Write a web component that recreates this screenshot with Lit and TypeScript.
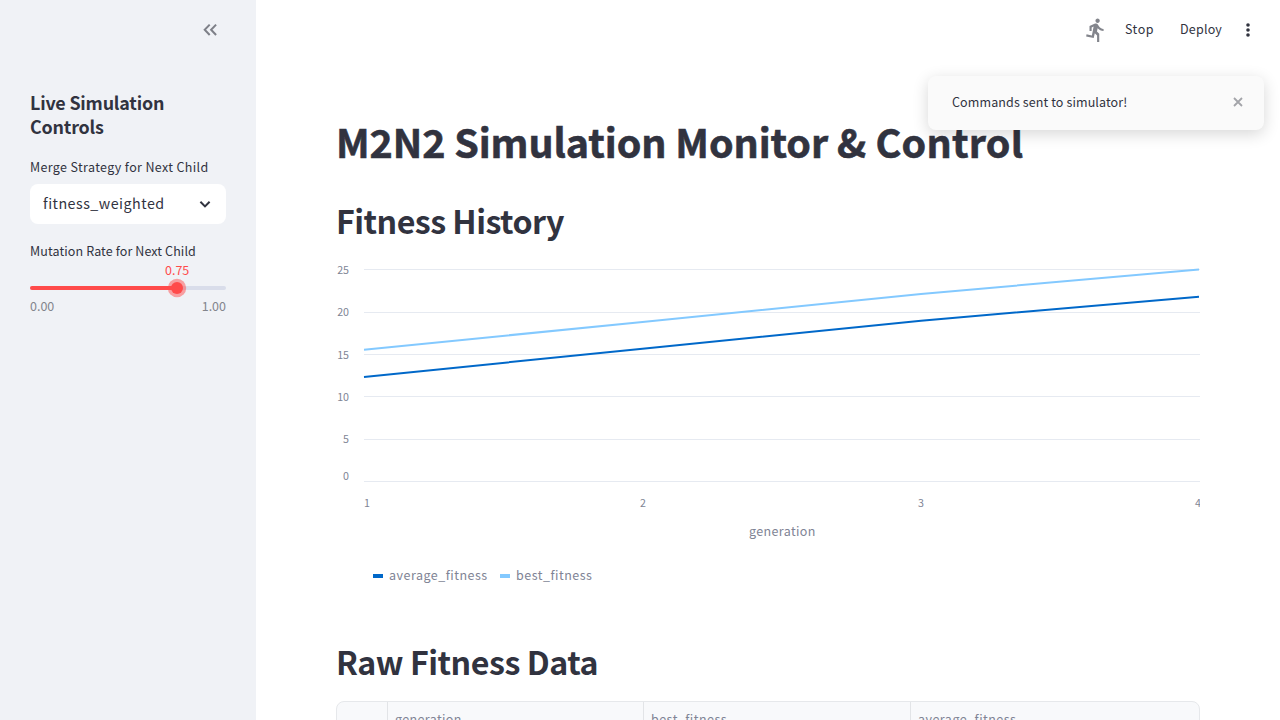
import { LitElement, html, svg, css } from "lit";
import { customElement, property } from "lit/decorators.js";

const FONT = css`"Noto Sans CJK SC", "Noto Sans CJK JP", "Open Sans", sans-serif`;

@customElement("side-panel")
class SidePanel extends LitElement {
  @property() strategy = "fitness_weighted";
  @property({ type: Number }) rate = 0.75;

  static styles = css`
    :host { display: flex; flex-direction: column; width: 256px; flex: none; height: 100%; background: #f0f2f6; box-sizing: border-box; padding: 0 30px; color: #31333f; font-family: ${FONT}; }
    .top { height: 60px; flex: none; display: flex; align-items: center; justify-content: flex-end; padding-right: 8px; }
    .top svg { display: block; }
    .title { margin: 30px 0 0; font-size: 17.9px; line-height: 24px; font-weight: 600; letter-spacing: -0.2px; }
    .label { font-size: 12.5px; line-height: 20px; white-space: nowrap; }
    .merge { margin-top: 19px; letter-spacing: 0.36px; }
    .select { margin-top: 7px; height: 40px; flex: none; border-radius: 8px; background: #fff; display: flex; align-items: center; justify-content: space-between; padding: 0 13px; font-size: 14.3px; letter-spacing: 0.48px; }
    .select span { padding-bottom: 4px; }
    .mutation { margin-top: 17px; letter-spacing: 0.11px; }
    .value-row { height: 20px; margin-top: -1px; display: flex; }
    .offset { flex: none; }
    .value { width: 24px; margin-left: -12px; text-align: center; color: #ff4b4b; font-size: 12.5px; line-height: 20px; }
    .slider { height: 16px; display: flex; align-items: center; }
    .track { height: 4px; border-radius: 4px; flex: 1; background: #d9ddea; display: flex; align-items: center; }
    .fill { height: 4px; border-radius: 4px 0 0 4px; background: #ff4b4b; }
    .thumb { width: 12px; height: 12px; border-radius: 50%; background: #ff4b4b; margin-left: -6px; box-shadow: 0 0 0 3.2px rgba(255, 75, 75, 0.5); flex: none; }
    .ends { display: flex; justify-content: space-between; font-size: 12.5px; line-height: 20px; color: #83858c; }
  `;

  render() {
    const pct = this.rate * 100;
    return html`
      <div class="top">
        <svg width="16" height="16" viewBox="0 0 16 16" fill="none" stroke="#7e8088" stroke-width="2"><path d="M7.7 2.6 2.7 7.8l5 5.2M14.1 2.6 9.1 7.8l5 5.2" /></svg>
      </div>
      <h2 class="title">Live Simulation Controls</h2>
      <div class="label merge">Merge Strategy for Next Child</div>
      <div class="select">
        <span>${this.strategy}</span>
        <svg width="16" height="16" viewBox="0 0 16 16" fill="none" stroke="#31333f" stroke-width="2"><path d="M3.4 5.8 8 10.4l4.6-4.6" /></svg>
      </div>
      <div class="label mutation">Mutation Rate for Next Child</div>
      <div class="value-row">
        <div class="offset" style="width:${pct}%"></div>
        <div class="value">${this.rate.toFixed(2)}</div>
      </div>
      <div class="slider"><div class="track"><div class="fill" style="width:${pct}%"></div><div class="thumb"></div></div></div>
      <div class="ends"><span>0.00</span><span>1.00</span></div>
    `;
  }
}

@customElement("fitness-chart")
class FitnessChart extends LitElement {
  static styles = css`
    :host { display: block; width: 864px; height: 340px; }
    svg { display: block; overflow: hidden; }
    text { font-family: ${FONT}; fill: #808495; }
    .tick { font-size: 10.7px; }
    .name { font-size: 12.5px; letter-spacing: 0.5px; }
    .axis { letter-spacing: 0.37px; }
    .grid { stroke: #e6eaf1; stroke-width: 1; }
    .series { fill: none; stroke-width: 2; }
  `;

  render() {
    const rows = [[25, 9.5, 14], [20, 52.5, 56], [15, 94.5, 99], [10, 136.5, 141], [5, 179.5, 183], [0, 221.5, 220]];
    return html`<svg width="864" height="340" viewBox="0 0 864 340">
      ${rows.map(([n, y, ty]) => svg`<line class="grid" x1="28" x2="864" y1=${y} y2=${y} /><text class="tick" x="13" y=${ty} text-anchor="end">${n}</text>`)}
      <polyline class="series" stroke="#0068c9" points="28,117 306.5,88.7 585,60.7 863,36.8" />
      <polyline class="series" stroke="#83c9ff" points="28,89.7 306.5,62 585,33.9 863,9.5" />
      <text class="tick" x="28" y="247">1</text>
      <text class="tick" x="307" y="247" text-anchor="middle">2</text>
      <text class="tick" x="585" y="247" text-anchor="middle">3</text>
      <text class="tick" x="859" y="247">4</text>
      <text class="name axis" x="413" y="276">generation</text>
      <rect x="37" y="314" width="10" height="4" fill="#0068c9" />
      <text class="name" x="53" y="320">average_fitness</text>
      <rect x="164" y="314" width="10" height="4" fill="#83c9ff" />
      <text class="name" x="180" y="320">best_fitness</text>
    </svg>`;
  }
}

@customElement("app-root")
class AppRoot extends LitElement {
  static styles = css`
    :host { display: flex; position: relative; width: 1280px; height: 720px; overflow: hidden; background: #fff; color: #31333f; font-family: ${FONT}; }
    .main { flex: 1; min-width: 0; display: flex; flex-direction: column; }
    .toolbar { height: 60px; flex: none; display: flex; align-items: center; justify-content: flex-end; padding-right: 24px; font-size: 12.5px; line-height: 20px; }
    .toolbar svg { display: block; }
    .toolbar span { padding-bottom: 2px; }
    .stop { margin-left: 16px; width: 29px; white-space: nowrap; letter-spacing: 0.5px; }
    .deploy { margin-left: 26px; width: 42px; white-space: nowrap; letter-spacing: 0.2px; }
    .more { margin-left: 18px; }
    .content { width: 864px; margin: 0 80px; }
    h1, h2 { margin: 0; white-space: nowrap; }
    h1 { font-size: 39.4px; font-weight: 700; line-height: 52px; margin-top: 55px; letter-spacing: -0.07px; -webkit-text-stroke: 0.6px #31333f; }
    .tail { letter-spacing: 0.25px; }
    h2 { font-size: 32.2px; font-weight: 600; line-height: 44px; letter-spacing: -0.54px; }
    .history { margin-top: 31px; }
    .chart { margin-top: 18px; }
    .raw { margin-top: 39px; letter-spacing: -0.48px; }
    .table { margin-top: 18px; height: 60px; border: 1px solid #e6e8eb; border-radius: 8px 8px 0 0; background: #f8f9fb; display: grid; grid-template-columns: 51px 256px 267px 1fr; box-sizing: border-box; overflow: hidden; }
    .th { border-right: 1px solid #e2e4e7; padding-left: 7px; font-size: 12.5px; line-height: 34px; color: #808495; letter-spacing: 0.48px; }
    .th.narrow { letter-spacing: 0.37px; }
    .th:last-child { border-right: 0; }
    .toast { position: absolute; left: 928px; top: 76px; width: 336px; height: 54px; box-sizing: border-box; padding: 0 20px 2px 24px; border-radius: 8px; background: #fafafa; box-shadow: 0 4px 16px rgba(0, 0, 0, 0.16); display: flex; align-items: center; justify-content: space-between; font-size: 12.5px; line-height: 20px; letter-spacing: 0.11px; }
  `;

  render() {
    return html`
      <side-panel></side-panel>
      <div class="main">
        <div class="toolbar">
          <svg width="26" height="26" viewBox="0 0 24 24" fill="#83858c"><path d="M13.49 5.48c1.1 0 2-.9 2-2s-.9-2-2-2-2 .9-2 2 .9 2 2 2zm-3.6 13.9l1-4.4 2.1 2v6h2v-7.5l-2.1-2 .6-3c1.3 1.5 3.3 2.5 5.5 2.5v-2c-1.9 0-3.5-1-4.3-2.4l-1-1.6c-.4-.6-1-1-1.7-1-.3 0-.5.1-.8.1l-5.2 2.2v4.7h2v-3.4l1.8-.7-1.6 8.1-4.9-1-.4 2 7 1.4z" /></svg>
          <span class="stop">Stop</span>
          <span class="deploy">Deploy</span>
          <svg class="more" width="16" height="16" viewBox="0 0 16 16" fill="#31333f"><circle cx="8" cy="3" r="1.8" /><circle cx="8" cy="8" r="1.8" /><circle cx="8" cy="13" r="1.8" /></svg>
        </div>
        <div class="content">
          <h1>M2N2 Simulation Monitor <span class="tail">&amp; Control</span></h1>
          <h2 class="history">Fitness History</h2>
          <fitness-chart class="chart"></fitness-chart>
          <h2 class="raw">Raw Fitness Data</h2>
          <div class="table">
            <div class="th"></div>
            <div class="th narrow">generation</div>
            <div class="th">best_fitness</div>
            <div class="th">average_fitness</div>
          </div>
        </div>
      </div>
      <div class="toast">
        <span>Commands sent to simulator!</span>
        <svg width="12" height="12" viewBox="0 0 12 12" fill="none" stroke="#a3a4a9" stroke-width="1.8"><path d="m2 2 8 8m0-8-8 8" /></svg>
      </div>
    `;
  }
}
